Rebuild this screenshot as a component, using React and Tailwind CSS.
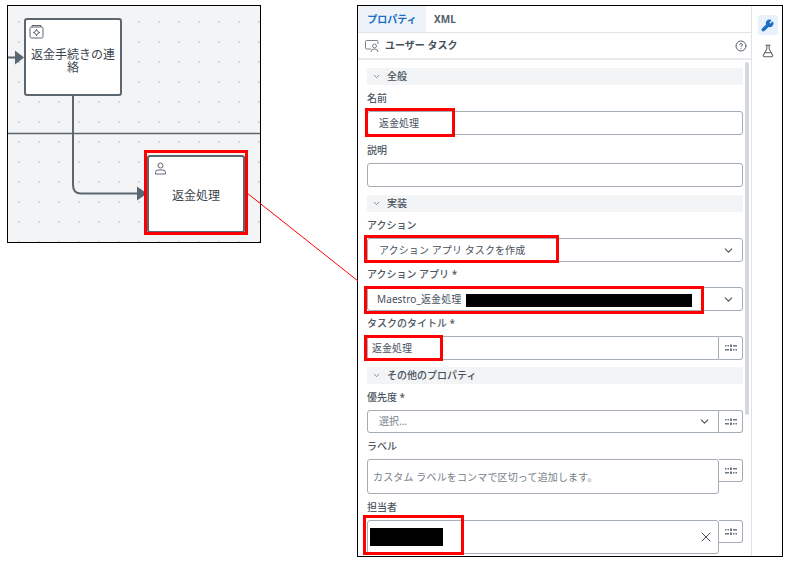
import { ChevronDown, CircleHelp, FlaskConical, Wrench, X } from "lucide-react";

function Section({ title, className = "" }) {
    return (
        <div className={`flex h-[17px] items-center rounded-[2px] bg-[#f3f4f6] pl-[5px] text-[10px] font-medium text-[#46515b] ${className}`}>
            <ChevronDown className="mr-[6px] h-[9px] w-[9px] text-[#5f6b75]" strokeWidth={2} />
            {title}
        </div>
    );
}

function Label({ children, className = "h-[26px]" }) {
    return <div className={`flex items-center text-[10px] font-medium text-[#4d5862] ${className}`}>{children}</div>;
}

function TokenIcon() {
    return (
        <svg width="12" height="8" viewBox="0 0 12 8" fill="#6b7680">
            <rect x="0" y="1" width="1.5" height="1.5" />
            <rect x="2.5" y="1" width="1.5" height="1.5" />
            <rect x="5" y="0.5" width="2" height="2.5" />
            <rect x="8" y="1" width="4" height="1.5" />
            <rect x="0" y="5" width="4" height="1.5" />
            <rect x="5" y="4.5" width="2" height="2.5" />
            <rect x="8" y="5" width="1.5" height="1.5" />
            <rect x="10.5" y="5" width="1.5" height="1.5" />
        </svg>
    );
}

function TokenButton({ className = "h-full" }) {
    return (
        <div className={`flex w-[24px] shrink-0 items-center justify-center rounded-r-[3px] border border-l-0 border-[#a4adb5] bg-white ${className}`}>
            <TokenIcon />
        </div>
    );
}

function Box({ children, className = "" }) {
    return <div className={`flex items-center rounded-[3px] border border-[#a4adb5] bg-white text-[10px] text-[#46515b] ${className}`}>{children}</div>;
}

function Highlight({ className }) {
    return <div className={`absolute border-[3px] border-[#ff0000] ${className}`} />;
}

export default function App() {
    return (
        <div
            className="relative flex h-[562px] w-[790px] items-start overflow-hidden bg-white"
            style={{ fontFamily: '"Noto Sans", "Noto Sans CJK JP", sans-serif' }}
        >
            {/* diagram */}
            <div className="relative ml-[7px] mt-[5px] h-[238px] w-[254px] shrink-0 overflow-hidden border border-black bg-[#f3f4f6] bg-[radial-gradient(circle,#d3d7db_0.8px,transparent_1px)] bg-[length:20px_20px] bg-[position:1px_6px]">
                <svg className="absolute left-0 top-0" width="252" height="236" fill="none">
                    <path d="M0 51.5H8" stroke="#5b6770" strokeWidth="2" />
                    <path d="M7 44.5L16 51.5L7 58.5Z" fill="#5b6770" />
                    <path d="M0 127.5H252" stroke="#5b6770" strokeWidth="1.5" />
                    <path d="M65 90V179Q65 187.5 73 187.5H132" stroke="#5b6770" strokeWidth="2" />
                    <path d="M129 180.5L139 187.5L129 194.5Z" fill="#5b6770" />
                </svg>
                <div className="absolute left-[16px] top-[12px] flex h-[78px] w-[98px] flex-col items-center rounded-[3px] border-2 border-[#5b6770] bg-white pt-[4px]">
                    <svg className="ml-[3px] self-start" width="15" height="15" viewBox="0 0 15 15" fill="none" stroke="#5b6770" strokeWidth="1">
                        <rect x="1" y="3" width="13" height="11" rx="1.5" />
                        <path d="M3 3V1.5H12V3" />
                        <circle cx="7.5" cy="8.5" r="2" />
                        <path d="M7.5 5V6M7.5 11V12M4 8.5H5M10 8.5H11" />
                    </svg>
                    <div className="mt-[9px] w-[88px] text-center text-[12px] leading-[13px] text-[#3a444d]">返金手続きの連絡</div>
                </div>
                <div className="absolute left-[139px] top-[149px] flex h-[78px] w-[98px] flex-col items-center justify-center rounded-[3px] border-2 border-[#5b6770] bg-white pt-[4px]">
                    <svg className="absolute left-[5px] top-[5px]" width="13" height="13" viewBox="0 0 13 13" fill="none" stroke="#5b6770" strokeWidth="1">
                        <circle cx="6.5" cy="3.5" r="2.5" />
                        <path d="M1.5 12V10.5Q1.5 8 4 8H9Q11.5 8 11.5 10.5V12Z" />
                    </svg>
                    <div className="text-[12px] text-[#3a444d]">返金処理</div>
                </div>
            </div>

            {/* properties panel */}
            <div className="relative ml-[96px] mt-[5px] flex h-[552px] w-[426px] shrink-0 overflow-hidden border border-black bg-white">
                <div className="flex w-[394px] shrink-0 flex-col border-r border-[#dfe3e7]">
                    <div className="flex h-[27px] shrink-0 items-stretch border-b border-[#dfe3e7] pt-[1px] text-[10px] font-bold">
                        <div className="-mt-[1px] flex w-[68px] items-center justify-center bg-[#edf3f9] pt-[1px] text-[#1a6fc4]">プロパティ</div>
                        <div className="flex items-center pl-[8px] text-[#55606a]">XML</div>
                    </div>
                    <div className="flex h-[27px] shrink-0 items-center border-b-2 border-[#e8ebee] pl-[7px] pr-[4px] text-[10px] font-bold text-[#46515b]">
                        <svg width="14" height="12" viewBox="0 0 14 12" fill="none" stroke="#6b7680" strokeWidth="0.9">
                            <path d="M6 9H1.5Q0.5 9 0.5 8V1.5Q0.5 0.5 1.5 0.5H12Q13 0.5 13 1.5V4" />
                            <circle cx="9.5" cy="6" r="2" />
                            <path d="M6 12Q6 9 9.5 9Q13 9 13 12" />
                        </svg>
                        <span className="ml-[6px]">ユーザー タスク</span>
                        <CircleHelp className="ml-auto h-[12px] w-[12px] text-[#55606a]" strokeWidth={2} />
                    </div>

                    <div className="relative flex-1 overflow-hidden pl-[9px] pr-[8px] pt-[8px]">
                        <Section title="全般" />
                        <Label>名前</Label>
                        <Box className="h-[24px] pl-[11px]">返金処理</Box>
                        <Label className="mt-[2px] h-[26px]">説明</Label>
                        <Box className="h-[24px]" />

                        <Section title="実装" className="mt-[8px]" />
                        <Label>アクション</Label>
                        <Box className="h-[24px] justify-between pl-[11px] pr-[7px] tracking-[0.1px]">
                            アクション アプリ タスクを作成
                            <ChevronDown className="h-[13px] w-[13px] text-[#46515b]" strokeWidth={2} />
                        </Box>
                        <Label className="h-[25px]">アクション アプリ *</Label>
                        <Box className="h-[24px] justify-between pl-[9px] pr-[7px] tracking-[0.1px]">
                            Maestro_返金処理
                            <ChevronDown className="h-[13px] w-[13px] text-[#46515b]" strokeWidth={2} />
                        </Box>
                        <Label className="h-[25px]">タスクのタイトル *</Label>
                        <div className="flex h-[24px]">
                            <Box className="min-w-0 flex-1 rounded-r-none pl-[4px]">返金処理</Box>
                            <TokenButton />
                        </div>

                        <Section title="その他のプロパティ" className="mt-[7px]" />
                        <Label>優先度 *</Label>
                        <div className="flex h-[23px]">
                            <Box className="min-w-0 flex-1 justify-between rounded-r-none pl-[11px] pr-[7px] text-[#76818a]">
                                選択...
                                <ChevronDown className="h-[13px] w-[13px] text-[#46515b]" strokeWidth={2} />
                            </Box>
                            <TokenButton />
                        </div>
                        <Label>ラベル</Label>
                        <div className="flex h-[35px] items-start">
                            <Box className="h-[35px] min-w-0 flex-1 pl-[5px] pt-[1px] tracking-[0.15px] text-[#76818a]">カスタム ラベルをコンマで区切って追加します。</Box>
                            <TokenButton className="h-[23px]" />
                        </div>
                        <Label>担当者</Label>
                        <div className="flex h-[34px] items-start">
                            <Box className="h-[34px] min-w-0 flex-1 justify-end pr-[4px]">
                                <X className="h-[16px] w-[16px] text-[#46515b]" strokeWidth={1.5} />
                            </Box>
                            <TokenButton className="h-[23px]" />
                        </div>

                        {/* scrollbar */}
                        <div className="absolute right-[2px] top-[2px] h-[353px] w-[4px] rounded-full bg-[#d4d8dc]" />
                    </div>
                </div>

                <div className="flex w-[30px] shrink-0 flex-col items-center pl-[1px] pt-[9px]">
                    <div className="flex h-[20px] w-[20px] items-center justify-center rounded-[2px] bg-[#e9f1fb]">
                        <Wrench className="h-[13px] w-[13px] fill-[#1a6fc4] text-[#1a6fc4]" strokeWidth={2} />
                    </div>
                    <FlaskConical className="mt-[9px] h-[14px] w-[14px] text-[#55606a]" strokeWidth={1.75} />
                </div>
            </div>

            {/* annotations */}
            <svg className="absolute left-0 top-0" width="790" height="562" fill="none">
                <path d="M247 193L358 281" stroke="#ff0000" strokeWidth="1" />
            </svg>
            <Highlight className="left-[144px] top-[150px] h-[85px] w-[104px]" />
            <Highlight className="left-[365px] top-[108px] h-[29px] w-[90px]" />
            <Highlight className="left-[364px] top-[235px] h-[28px] w-[195px]" />
            <Highlight className="left-[364px] top-[286px] h-[28px] w-[340px]" />
            <Highlight className="left-[364px] top-[335px] h-[26px] w-[79px]" />
            <Highlight className="left-[363px] top-[515px] h-[40px] w-[101px]" />
            <div className="absolute left-[466px] top-[294px] h-[13px] w-[226px] bg-black" />
            <div className="absolute left-[370px] top-[528px] h-[18px] w-[73px] bg-black" />
        </div>
    );
}
